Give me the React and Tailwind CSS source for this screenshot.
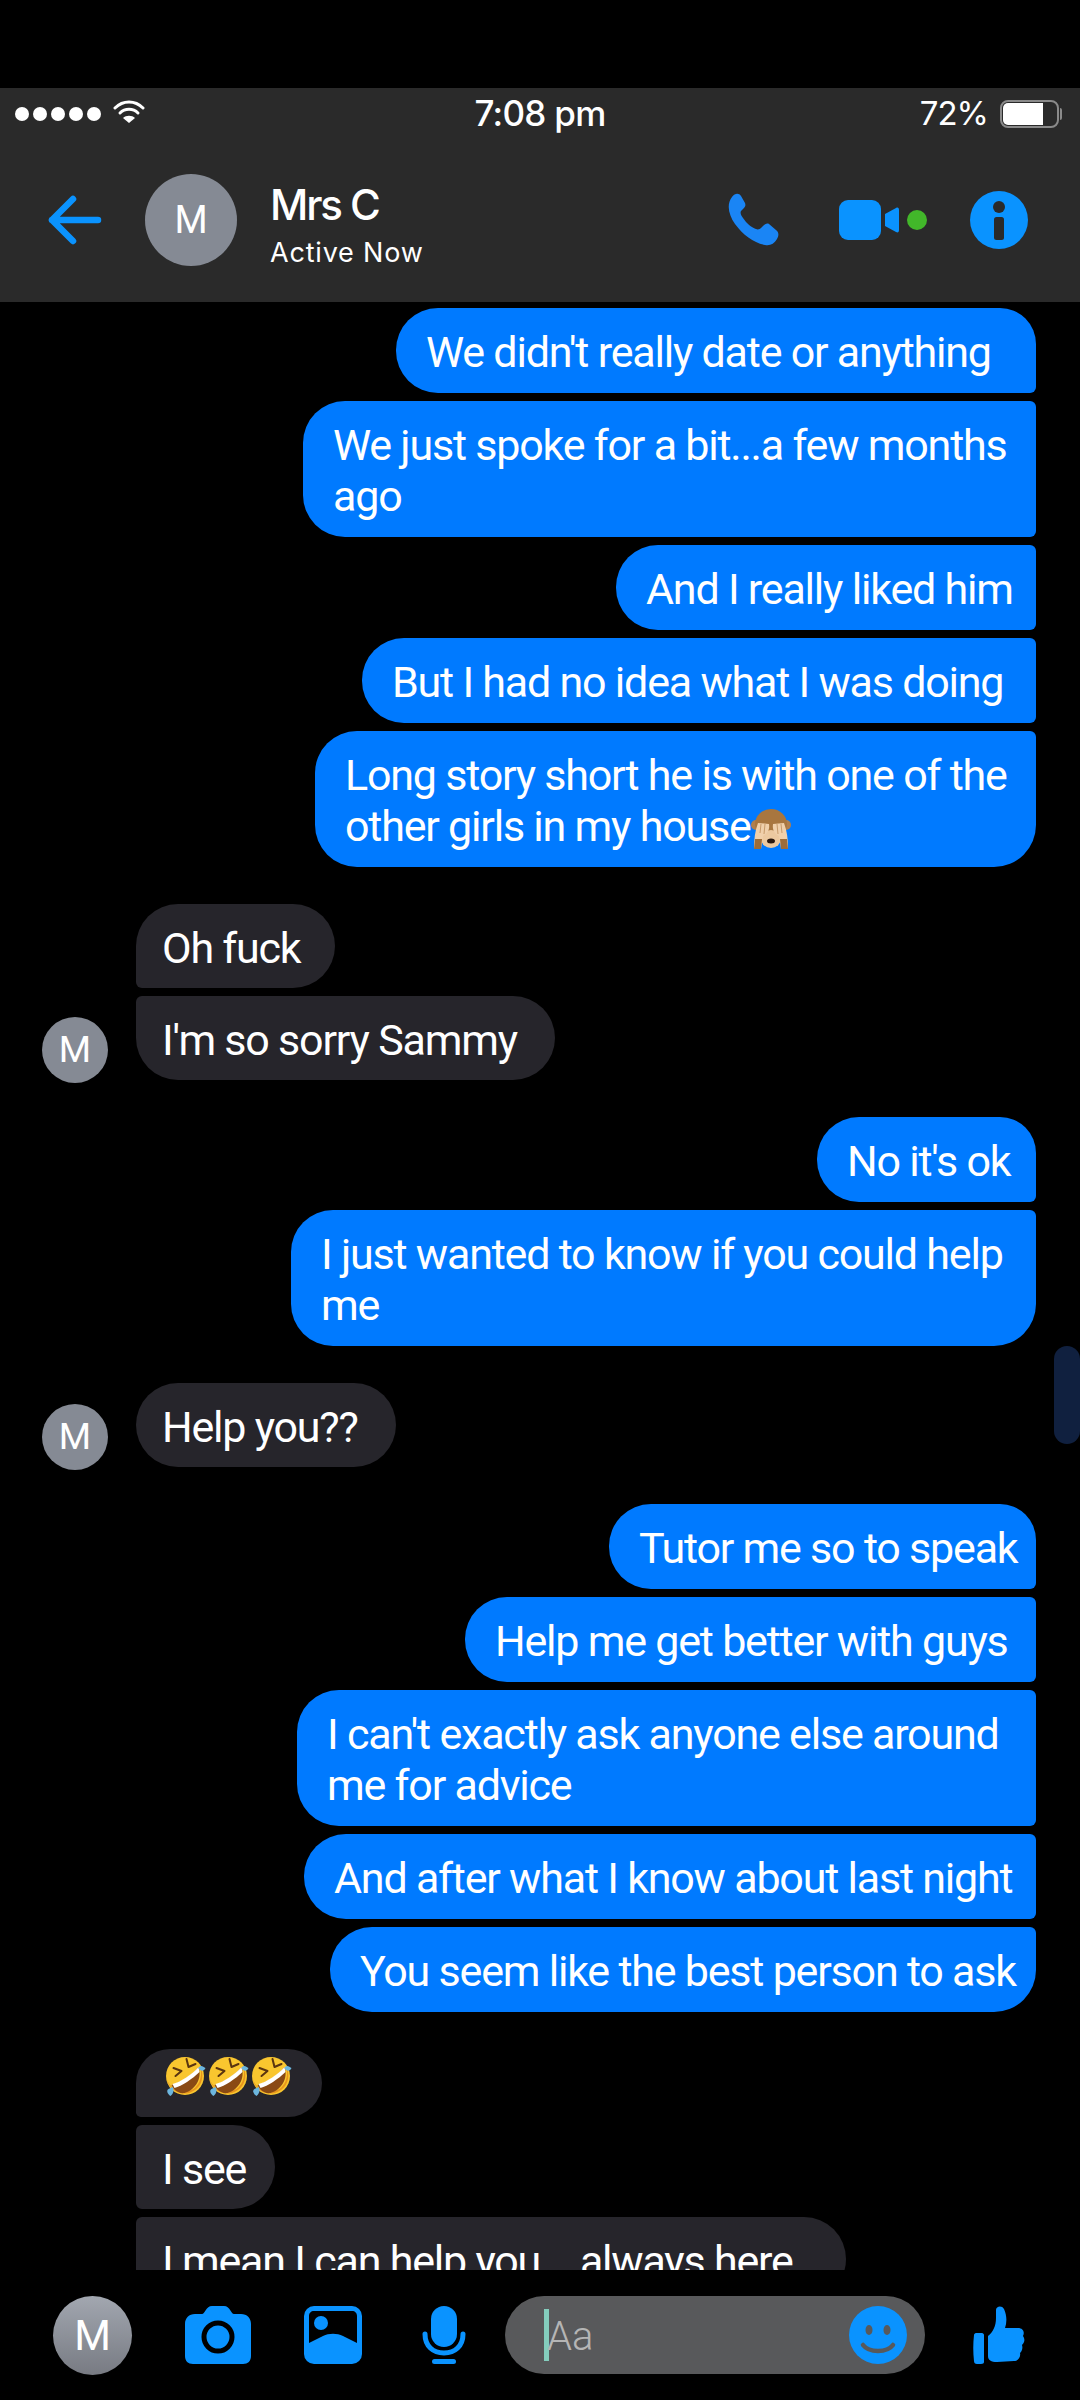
import React from "react"

const font = { fontFamily: "Roboto, Inter, sans-serif" }

const Rofl = () => (
  <svg width="41" height="40" viewBox="0 0 40 40" className="shrink-0">
    <circle cx="19.5" cy="20" r="19" fill="#f9c62f" />
    <path d="M34 9 C40 20 36 32 26 36 C14 41 3 33 1 22 C4 34 18 38 28 33 C36 27 37 16 34 9Z" fill="#e8951c" />
    <path d="M6 29 C14 27 26 20 33 11 C37 22 30 34 19 37 C12 38 8 33 6 29Z" fill="#8a4a14" />
    <path d="M7 28 C15 26 26 19 33 11 L34 16 C27 23 16 30 9 32Z" fill="#fff" />
    <path d="M8 12 L16 15 L10 20" fill="none" stroke="#5a3510" strokeWidth="2" strokeLinecap="round" strokeLinejoin="round" />
    <path d="M21 3 L23 11 L30 8" fill="none" stroke="#5a3510" strokeWidth="2" strokeLinecap="round" strokeLinejoin="round" />
    <path d="M33 12 C35 8 38 11 40 12 C39 15 35 16 33 12Z" fill="#6cb6de" />
    <path d="M3 33 C0 35 3 39 5 40 C8 38 9 33 7 31Z" fill="#6cb6de" />
  </svg>
)

const Monkey = () => (
  <svg width="40" height="40" viewBox="0 0 40 40" className="shrink-0 inline-block align-[-8px]">
    <circle cx="5" cy="16" r="5" fill="#b07f4e" />
    <circle cx="35" cy="16" r="5" fill="#b07f4e" />
    <ellipse cx="20" cy="15" rx="16" ry="15" fill="#a8763f" />
    <ellipse cx="20" cy="30" rx="10" ry="9" fill="#ecc9a0" />
    <ellipse cx="20" cy="32" rx="4" ry="2.5" fill="#2c1a10" />
    <path d="M3 40 C3 30 4 22 7 14 L18 15 C19 21 16 25 12 27 L10 40Z" fill="#f0d0ab" />
    <path d="M37 40 C37 30 36 22 33 14 L22 15 C21 21 24 25 28 27 L30 40Z" fill="#f0d0ab" />
    <path d="M10 15 L9 24 M14 15 L13 25 M26 15 L27 25 M30 15 L31 24" stroke="#c79a6a" strokeWidth="1" />
    <path d="M3 40 L4 30 L11 30 L10 40Z M37 40 L36 30 L29 30 L30 40Z" fill="#9c6c38" />
  </svg>
)

const right = "pl-[30px] pb-[15px] rounded-l-[42px] bg-[#007aff]"
const left = "pl-[26px] pb-[14px] rounded-r-[42px] bg-[#26252b]"

const groups = [
  {
    side: "right",
    mt: "mt-[6px]",
    items: [
      { w: "w-[640px]", r: "rounded-tr-[36px] rounded-br-[6px]", lines: ["We didn't really date or anything"] },
      { w: "w-[733px]", r: "rounded-r-[6px]", lines: ["We just spoke for a bit...a few months", "ago"] },
      { w: "w-[420px]", r: "rounded-r-[6px]", lines: ["And I really liked him"] },
      { w: "w-[674px]", r: "rounded-r-[6px]", lines: ["But I had no idea what I was doing"] },
      { w: "w-[721px]", r: "rounded-tr-[6px] rounded-br-[42px]", lines: ["Long story short he is with one of the", "other girls in my house"], monkey: true },
    ],
  },
  {
    side: "left",
    mt: "mt-[37px]",
    avatar: true,
    items: [
      { w: "w-[199px]", r: "rounded-tl-[42px] rounded-bl-[6px]", lines: ["Oh fuck"] },
      { w: "w-[419px]", r: "rounded-tl-[6px] rounded-bl-[42px]", lines: ["I'm so sorry Sammy"] },
    ],
  },
  {
    side: "right",
    mt: "mt-[37px]",
    items: [
      { w: "w-[219px]", r: "rounded-tr-[36px] rounded-br-[6px]", lines: ["No it's ok"] },
      { w: "w-[745px]", r: "rounded-tr-[6px] rounded-br-[42px]", lines: ["I just wanted to know if you could help", "me"] },
    ],
  },
  {
    side: "left",
    mt: "mt-[37px]",
    avatar: true,
    items: [{ w: "w-[260px]", r: "rounded-l-[42px]", lines: ["Help you??"] }],
  },
  {
    side: "right",
    mt: "mt-[37px]",
    items: [
      { w: "w-[427px]", r: "rounded-tr-[36px] rounded-br-[6px]", lines: ["Tutor me so to speak"] },
      { w: "w-[571px]", r: "rounded-r-[6px]", lines: ["Help me get better with guys"] },
      { w: "w-[739px]", r: "rounded-r-[6px]", lines: ["I can't exactly ask anyone else around", "me for advice"] },
      { w: "w-[732px]", r: "rounded-r-[6px]", lines: ["And after what I know about last night"] },
      { w: "w-[706px]", r: "rounded-tr-[6px] rounded-br-[42px]", lines: ["You seem like the best person to ask"] },
    ],
  },
  {
    side: "left",
    mt: "mt-[37px]",
    items: [
      { w: "w-[186px]", r: "rounded-tl-[42px] rounded-bl-[6px]", rofl: true },
      { w: "w-[139px]", r: "rounded-l-[6px]", lines: ["I see"] },
      { w: "w-[710px]", r: "rounded-l-[6px]", lines: ["I mean I can help you... always here"] },
    ],
  },
]

function Bubble({ item, side }) {
  if (item.rofl) {
    return (
      <div className={`${left} ${item.w} ${item.r} h-[68px] flex items-center gap-[2px] pl-[29px] pb-0`}>
        <Rofl />
        <Rofl />
        <Rofl />
      </div>
    )
  }
  return (
    <div className={`${side === "right" ? right : left} ${item.w} ${item.r} pt-[19px] text-white text-[43px] leading-[51px] tracking-[-0.028em] whitespace-nowrap`}>
      {item.lines.map((line, i) => (
        <div key={i}>
          {line}
          {item.monkey && i === 1 && <Monkey />}
        </div>
      ))}
    </div>
  )
}

function Group({ group }) {
  if (group.side === "right") {
    return (
      <div className={`${group.mt} flex flex-col items-end gap-[8px] pr-[44px]`}>
        {group.items.map((item, i) => (
          <Bubble key={i} item={item} side="right" />
        ))}
      </div>
    )
  }
  return (
    <div className={`${group.mt} flex items-end pl-[42px]`}>
      <div className="w-[94px] shrink-0">
        {group.avatar && (
          <div className="w-[66px] h-[66px] -mb-[3px] rounded-full bg-[#858a94] text-white text-[37px] flex items-center justify-center">
            M
          </div>
        )}
      </div>
      <div className="flex flex-col items-start gap-[8px]">
        {group.items.map((item, i) => (
          <Bubble key={i} item={item} side="left" />
        ))}
      </div>
    </div>
  )
}

function StatusBar() {
  return (
    <div className="h-[50px] grid grid-cols-[1fr_auto_1fr] items-center text-white font-['Inter']">
      <div className="flex items-center pl-[15px]">
        <div className="flex gap-[4px]">
          {[0, 1, 2, 3, 4].map((d) => (
            <div key={d} className="w-[14px] h-[14px] rounded-full bg-white" />
          ))}
        </div>
        <svg width="32" height="24" viewBox="0 0 32 24" className="ml-[12px] -mt-[3px]">
          <path d="M2 8 C10 0 22 0 30 8" fill="none" stroke="#fff" strokeWidth="3" strokeLinecap="round" />
          <path d="M7 13 C12 8 20 8 25 13" fill="none" stroke="#fff" strokeWidth="3" strokeLinecap="round" />
          <path d="M16 23 L10 18 C13 15 19 15 22 18Z" fill="#fff" />
        </svg>
      </div>
      <div className="text-[35px] font-medium tracking-[-0.02em] -mt-[1px]">7:08 pm</div>
      <div className="flex items-center justify-end pr-[18px]">
        <span className="text-[33px] tracking-[-0.03em] mr-[12px]">72%</span>
        <div className="w-[59px] h-[28px] rounded-[8px] border-2 border-[#8a8a8a] p-[1px]">
          <div className="w-[40px] h-full bg-white rounded-l-[5px]" />
        </div>
        <div className="w-[2px] h-[12px] ml-[1px] bg-[#8a8a8a] rounded-r-full" />
      </div>
    </div>
  )
}

function NavBar() {
  return (
    <div className="h-[164px] flex items-center pl-[48px] pr-[52px]">
      <svg width="54" height="50" viewBox="0 0 54 50">
        <path d="M25 4 L4 25 L25 46 M4 25 L50 25" fill="none" stroke="#0a93ff" strokeWidth="6.5" strokeLinecap="round" strokeLinejoin="round" />
      </svg>
      <div className="ml-[43px] w-[92px] h-[92px] rounded-full bg-[#858a94] text-white text-[38px] flex items-center justify-center">
        M
      </div>
      <div className="ml-[33px] text-white font-['Inter'] pt-[12px]">
        <div className="text-[42px] leading-[48px] font-medium tracking-[-0.05em]">Mrs C</div>
        <div className="text-[27px] leading-[36px] tracking-[0.03em] mt-[6px]">Active Now</div>
      </div>
      <svg width="54" height="54" viewBox="0 0 54 54" className="ml-auto">
        <path d="M6 4 C9 0 13 0 15 3 L19 10 C20 13 19 14 17 16 L15 18 C14 20 15 22 17 25 C21 31 25 34 30 36 C32 37 34 36 35 35 L37 33 C39 31 41 30 43 31 L50 37 C53 39 53 43 51 46 C48 51 44 53 39 52 C28 50 17 42 9 31 C3 22 0 12 6 4Z" fill="#1a85f5" />
      </svg>
      <svg width="88" height="40" viewBox="0 0 88 40" className="ml-[59px]">
        <rect x="0" y="0" width="42" height="40" rx="9" fill="#0a93ff" />
        <path d="M46 14 L57 8 C59 7 60 8 60 10 L60 30 C60 32 59 33 57 32 L46 26Z" fill="#0a93ff" />
        <circle cx="78" cy="20" r="10" fill="#42b72a" />
      </svg>
      <svg width="58" height="58" viewBox="0 0 58 58" className="ml-[43px]">
        <circle cx="29" cy="29" r="29" fill="#0a93ff" />
        <circle cx="29" cy="16" r="6" fill="#2a2a2a" />
        <rect x="24" y="26" width="10" height="23" rx="2.5" fill="#2a2a2a" />
      </svg>
    </div>
  )
}

function BottomBar() {
  return (
    <div className="h-[130px] flex items-center pl-[53px]">
      <div className="w-[79px] h-[79px] rounded-full bg-gradient-to-b from-[#a2a7b0] to-[#787b83] text-white text-[42px] flex items-center justify-center">
        M
      </div>
      <svg width="66" height="58" viewBox="0 0 66 58" className="ml-[53px]">
        <path d="M10 8 L17 8 C20 8 21 0 27 0 L39 0 C45 0 46 8 49 8 L56 8 C62 8 66 12 66 18 L66 50 C66 55 63 58 58 58 L8 58 C3 58 0 55 0 50 L0 18 C0 12 4 8 10 8Z" fill="#0a93ff" />
        <circle cx="33" cy="31" r="14" fill="#0a93ff" stroke="#000" strokeWidth="5" />
      </svg>
      <svg width="58" height="58" viewBox="0 0 58 58" className="ml-[53px]">
        <rect width="58" height="58" rx="10" fill="#0a93ff" />
        <path d="M5 37 L5 10 C5 7 7 5 10 5 L48 5 C51 5 53 7 53 10 L53 37 L39 30 C33 27 25 27 19 30Z" fill="#000" />
        <circle cx="17" cy="17" r="7" fill="#0a93ff" />
      </svg>
      <svg width="44" height="58" viewBox="0 0 44 58" className="ml-[60px]">
        <rect x="9" y="0" width="26" height="41" rx="13" fill="#0a93ff" />
        <path d="M3 28 C3 40 11 47 22 47 C33 47 41 40 41 28" fill="none" stroke="#0a93ff" strokeWidth="5" strokeLinecap="round" />
        <rect x="10" y="53" width="24" height="5" rx="2.5" fill="#0a93ff" />
      </svg>
      <div className="ml-[39px] w-[420px] h-[78px] rounded-full bg-[#58595b] flex items-center pl-[39px] pr-[18px]">
        <div className="w-[5px] h-[52px] bg-[#84cdbd] shrink-0" />
        <span className="text-[40px] text-[#b5b5b5] font-light pt-[3px] -ml-[2px]">Aa</span>
        <svg width="58" height="58" viewBox="0 0 58 58" className="ml-auto">
          <circle cx="29" cy="29" r="29" fill="#0a93ff" />
          <ellipse cx="20" cy="24" rx="3.5" ry="5" fill="#58595b" />
          <ellipse cx="38" cy="24" rx="3.5" ry="5" fill="#58595b" />
          <path d="M14 39 C20 47 38 47 44 39" fill="none" stroke="#58595b" strokeWidth="4.5" strokeLinecap="round" />
        </svg>
      </div>
      <svg width="56" height="58" viewBox="0 0 52 58" className="ml-[46px]">
        <path d="M3 27 L9 27 C10 27 11 28 11 29 L11 56 C11 57 10 58 8 58 L4 58 C2 58 1 57 1 55 C0 46 0 38 1 29 C1 28 2 27 3 27Z" fill="#0a93ff" />
        <path d="M15 30 C20 26 23 20 23 12 L23 4 C23 0 29 -1 31 3 C34 10 34 16 32 22 L45 22 C50 22 52 26 50 30 C52 33 52 36 49 39 C50 42 49 45 47 47 C48 51 45 55 41 55 L24 56 C18 56 15 54 15 50Z" fill="#0a93ff" />
      </svg>
    </div>
  )
}

export default function App() {
  return (
    <div className="relative w-[1080px] h-[2400px] bg-black overflow-hidden" style={font}>
      <div className="h-[88px]" />
      {/* Header */}
      <div className="bg-[#2a2a2a]">
        <StatusBar />
        <NavBar />
      </div>

      {/* Messages */}
      <div className="h-[1968px] overflow-hidden">
        {groups.map((group, i) => (
          <Group key={i} group={group} />
        ))}
      </div>

      <BottomBar />

      {/* Scroll indicator */}
      <div className="absolute left-[1054px] top-[1346px] w-[26px] h-[98px] rounded-full bg-[#10203f]" />
    </div>
  )
}
